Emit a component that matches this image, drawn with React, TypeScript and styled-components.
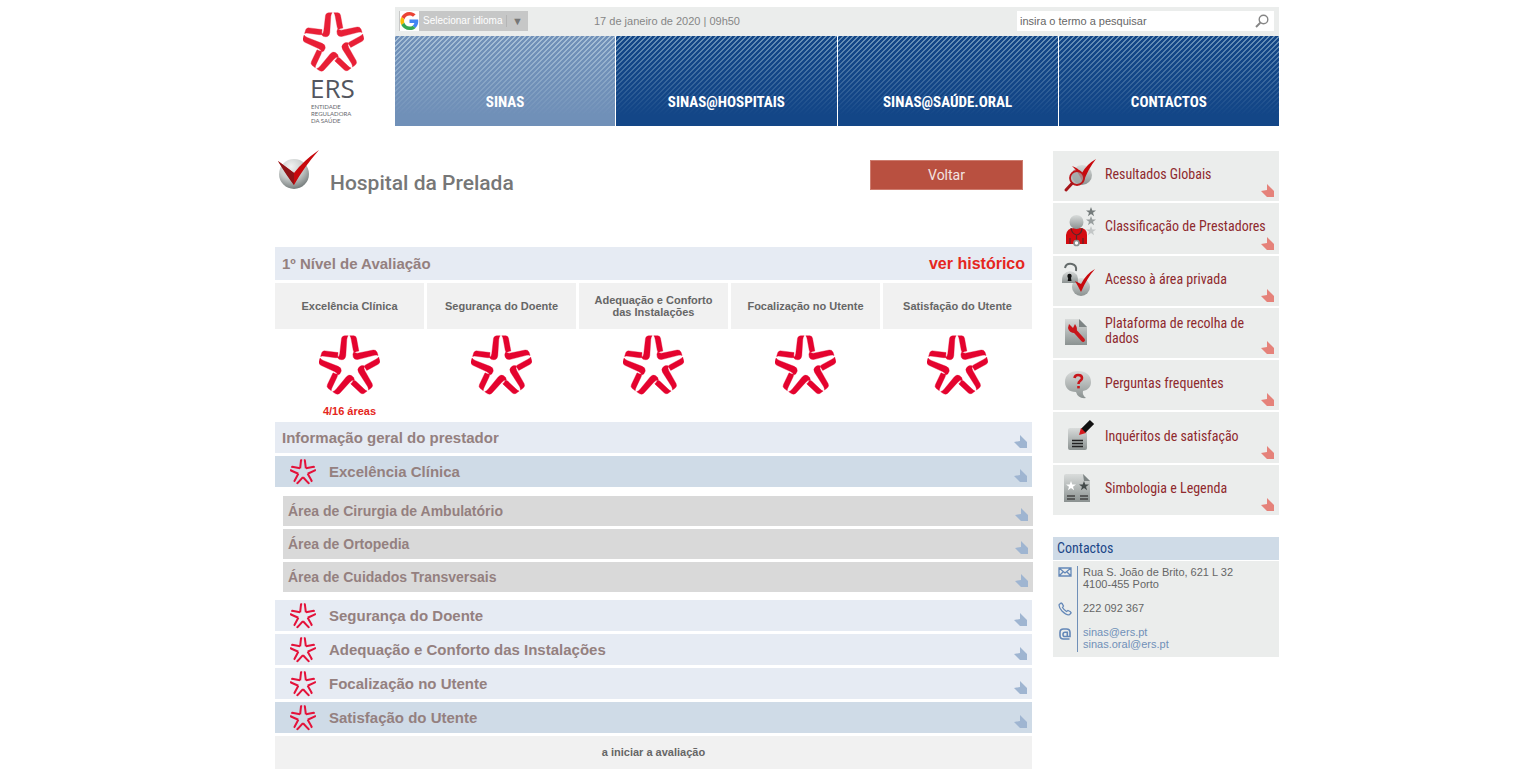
import React from 'react';
import styled, { createGlobalStyle, css } from 'styled-components';

const GlobalStyle = createGlobalStyle`
  *, *::before, *::after { box-sizing: border-box; }
  body {
    margin: 0;
    background: #fff;
    color: #666;
    font-family: "Liberation Sans", Arial, sans-serif;
    font-size: 11px;
  }
  button, input { font: inherit; }
  h1, h2, p, ul { margin: 0; padding: 0; }
  ul { list-style: none; }
`;

const narrow = '"Liberation Sans Narrow", "Arial Narrow", "Roboto Condensed", "DejaVu Sans Condensed", sans-serif';

const Page = styled.div`
  max-width: 1034px;
  margin: 0 auto;
  padding: 7px 0 7px 30px;
`;

const Header = styled.header`
  display: flex;
`;

const Brand = styled.a`
  flex: 0 0 120px;
  padding: 5px 0 0 28px;
  color: #53565f;
  text-decoration: none;
`;

const BrandName = styled.span`
  display: block;
  padding-left: 7px;
  font-family: "Open Sans", sans-serif;
  font-size: 26px;
  line-height: 26px;
`;

const BrandNote = styled.span`
  display: block;
  padding-left: 8px;
  margin-top: 2px;
  font-family: Lato, sans-serif;
  font-size: 6px;
  line-height: 7px;
  color: #66686e;
`;

const HeaderMain = styled.div`
  flex: 1;
  min-width: 0;
`;

const TopBar = styled.div`
  display: flex;
  align-items: center;
  height: 29px;
  padding: 0 5px 1px 4px;
  background: #ebedec;
`;

const LanguageButton = styled.button`
  display: flex;
  align-items: center;
  height: 20px;
  width: 129px;
  padding: 0 5px 0 1px;
  border: 0;
  background: #c6c7c7;
  color: #fff;
  text-align: left;
`;

const LanguageLabel = styled.span`
  flex: 1;
  padding-left: 4px;
  font-size: 10px;
  line-height: 14px;
  white-space: nowrap;
`;

const LanguageCaret = styled.span`
  border-left: 1px solid #b5b5b5;
  padding-left: 5px;
  color: #777;
`;

const Today = styled.p`
  flex: 1;
  padding-left: 66px;
  color: #868686;
`;

const Search = styled.form`
  display: flex;
  align-items: center;
  width: 257px;
  height: 20px;
  background: #fff;
`;

const SearchInput = styled.input`
  flex: 1;
  min-width: 0;
  padding: 0 3px;
  border: 0;
  background: transparent;
  outline: 0;
  &::placeholder { color: #666; opacity: 1; }
`;

const SearchButton = styled.button`
  display: flex;
  padding: 0 5px 0 0;
  border: 0;
  background: none;
`;

const Nav = styled.nav`
  display: grid;
  grid-template-columns: repeat(4, 1fr);
  gap: 1px;
`;

const NavLink = styled.a<{ $active?: boolean }>`
  display: flex;
  align-items: flex-end;
  justify-content: center;
  height: 90px;
  padding-bottom: 15px;
  color: #fff;
  font: bold 15px/18px ${narrow};
  text-decoration: none;
  --base: ${p => (p.$active ? '#7090b8' : '#134687')};
  --line: ${p => (p.$active ? '#a9c2d8' : '#6a92b8')};
  background:
    linear-gradient(to bottom, transparent, var(--base) 88%),
    linear-gradient(135deg, var(--line) 12%, transparent 20% 44%, var(--line) 50% 62%, transparent 70% 94%, var(--line) 100%) 0 0 / 5px 5px,
    var(--base);
`;

const Columns = styled.div`
  display: flex;
  align-items: flex-start;
  gap: 21px;
  padding-top: 24px;
`;

const Main = styled.main`
  flex: 1;
  min-width: 0;
`;

const TitleRow = styled.div`
  display: flex;
  align-items: flex-start;
  height: 97px;
  padding-right: 9px;
`;

const Title = styled.h1`
  flex: 1;
  padding: 19px 0 0 11px;
  color: #777;
  font: 500 21px/28px Roboto, sans-serif;
`;

const BackButton = styled.button`
  width: 153px;
  height: 30px;
  margin-top: 10px;
  border: 1px solid #cd7c6f;
  background: #b95040;
  color: #f3e4e1;
  font: 14px/16px Roboto, sans-serif;
`;

const LevelBar = styled.div`
  display: flex;
  align-items: center;
  justify-content: space-between;
  height: 33px;
  padding: 0 7px;
  background: #e6ebf3;
`;

const LevelTitle = styled.h2`
  color: #94807f;
  font-size: 15px;
  line-height: 18px;
`;

const HistoryLink = styled.a`
  color: #e52620;
  font-size: 16px;
  font-weight: bold;
  line-height: 18px;
  text-decoration: none;
`;

const Ratings = styled.table`
  table-layout: fixed;
  border-spacing: 3px;
  border-collapse: separate;
  width: calc(100% + 6px);
  margin: 0 -3px;
`;

const RatingHead = styled.th`
  height: 46px;
  padding: 0 12px;
  background: #f1f1f1;
  color: #666;
  font-size: 11px;
  line-height: 12px;
`;

const RatingCell = styled.td`
  height: 87px;
  padding: 3px 0 0;
  text-align: center;
  vertical-align: top;
  color: #e52620;
  font-weight: bold;
`;

const Areas = styled.p`
  padding-top: 6px;
  line-height: 14px;
`;

const Stack = styled.ul`
  display: grid;
  gap: 3px;
`;

const SubStack = styled(Stack)`
  margin-right: -1px;
  padding: 6px 0 5px 8px;
`;

type Tone = 'light' | 'strong' | 'grey';
const tones: Record<Tone, string> = { light: '#e6ebf3', strong: '#cfdbe7', grey: '#d9d9d9' };

const RowButton = styled.button<{ $tone: Tone }>`
  display: flex;
  align-items: center;
  width: 100%;
  height: 31px;
  padding: 0 5px 0 7px;
  border: 0;
  background: ${p => tones[p.$tone]};
  color: #94807f;
  font-size: 15px;
  font-weight: bold;
  line-height: 18px;
  text-align: left;
  ${p => p.$tone === 'grey' && css`
    height: 30px;
    padding-left: 5px;
    font-size: 14px;
  `}
`;

const RowIcon = styled.span`
  display: flex;
  width: 47px;
  padding-left: 8px;
`;

const RowText = styled.span`
  flex: 1;
`;

const RowMark = styled.span`
  display: flex;
  align-self: flex-end;
  padding-bottom: 5px;
`;

const Pending = styled.p`
  height: 33px;
  background: #f1f1f1;
  color: #666;
  font-weight: bold;
  line-height: 33px;
  text-align: center;
`;

const Sidebar = styled.aside`
  flex: 0 0 226px;
  padding-top: 1px;
`;

const Shortcuts = styled.ul`
  display: grid;
  grid-auto-rows: 1fr;
  gap: 2px;
  min-height: 364px;
`;

const Shortcut = styled.a`
  position: relative;
  display: flex;
  align-items: center;
  height: 100%;
  padding: 0 10px 3px 4px;
  background: #ebedec;
  color: #8f2a2e;
  font: 14px/15px ${narrow};
  text-decoration: none;
`;

const ShortcutIcon = styled.span`
  flex: 0 0 48px;
  display: flex;
`;

const ShortcutMark = styled.span`
  position: absolute;
  right: 5px;
  bottom: 4px;
  display: flex;
`;

const Contacts = styled.section`
  margin-top: 22px;
`;

const ContactsTitle = styled.h2`
  padding: 0 4px;
  background: #cfdbe7;
  color: #1c4788;
  font: 14px/23px ${narrow};
`;

const ContactsBody = styled.div`
  margin-top: 1px;
  padding: 5px;
  background: #ebedec;
`;

const ContactRow = styled.div`
  display: flex;
`;

const ContactIcon = styled.span`
  flex: 0 0 19px;
`;

const ContactText = styled.div<{ $last?: boolean }>`
  padding: 0 0 ${p => (p.$last ? 2 : 12)}px 5px;
  border-left: 1px solid #7090b8;
  line-height: 12px;
`;

const MailLink = styled.a`
  display: block;
  color: #7090b8;
  text-decoration: none;
`;

function Star({ size, color = '#e4032e' }: { size: number; color?: string }) {
  return (
    <svg width={size} height={size} viewBox="-91 -93 182 182" fill={color} stroke={color} strokeWidth="1" aria-hidden="true">
      {[0, 72, 144, 216, 288].map(a => (
        <g key={a} transform={`rotate(${a})`}>
          <path d="M-4-91H-14Q-23-90-24-82L-29-38Q-30-29-36-25Q-31-18-22-19Q-12-20-11-32L-8-80Q-7-88-4-91Z" />
          <path d="M1-91H13Q20-90 21-83L28-45Q21-44 15-41Q12-42 11-48L5-80Q4-88 1-91Z" />
        </g>
      ))}
    </svg>
  );
}

function SmallStar() {
  return (
    <svg width="26" height="26" viewBox="-91 -93 182 182" fill="none" stroke="#e4123a" strokeWidth="14" strokeLinejoin="round" aria-hidden="true">
      {[0, 72, 144, 216, 288].map(a => (
        <path key={a} transform={`rotate(${a})`} d="M-20-28L-14-84H-6M6-84H13L20-28" />
      ))}
    </svg>
  );
}

function Corner({ color }: { color: string }) {
  return (
    <svg width="13" height="13" viewBox="0 0 13 13" aria-hidden="true">
      <path d="M0 7L6 6V0L13 7V13H6Z" fill={color} />
    </svg>
  );
}

function Google() {
  return (
    <svg width="19" height="20" viewBox="-1 -2 50 52" aria-hidden="true">
      <path fill="#fff" d="M-2-3h53v55h-53z" />
      <path fill="#ea4335" d="M24 9.500c3.500 0 6.700 1.200 9.200 3.600l6.900-6.900C35.900 2.400 30.500 0 24 0 14.600 0 6.500 5.400 2.600 13.200l8 6.200C12.400 13.700 17.700 9.500 24 9.500z" />
      <path fill="#4285f4" d="M47 24.600c0-1.600-.2-3.100-.4-4.600H24v9h12.900c-.6 3-2.200 5.500-4.800 7.200l7.700 6C44.400 38 47 31.800 47 24.600z" />
      <path fill="#fbbc05" d="M10.500 28.600a14.500 14.500 0 0 1 0-9.200l-8-6.200a24 24 0 0 0 0 21.600z" />
      <path fill="#34a853" d="M24 48c6.500 0 11.900-2.100 15.900-5.800l-7.700-6c-2.200 1.500-4.900 2.300-8.200 2.300-6.300 0-11.600-4.200-13.500-9.900l-8 6.200C6.500 42.600 14.600 48 24 48z" />
    </svg>
  );
}

function SearchGlyph() {
  return (
    <svg width="14" height="14" viewBox="0 0 14 14" fill="none" stroke="#858585" aria-hidden="true">
      <circle cx="8.500" cy="5.500" r="4.300" strokeWidth="1.400" />
      <path d="M5.300 8.800L1 13" strokeWidth="1.900" />
    </svg>
  );
}

function Silver({ id }: { id: string }) {
  return (
    <defs>
      <linearGradient id={id} x1="0" y1="0" x2="0" y2="1">
        <stop offset="0" stopColor="#d9dcdb" />
        <stop offset="1" stopColor="#8b9291" />
      </linearGradient>
    </defs>
  );
}

function CheckBall() {
  return (
    <svg width="44" height="42" viewBox="0 0 44 42" aria-hidden="true">
      <defs>
        <radialGradient id="ball" cx=".4" cy=".25" r=".8">
          <stop offset="0" stopColor="#f1f3f2" />
          <stop offset=".5" stopColor="#c9cdcc" />
          <stop offset="1" stopColor="#6d7474" />
        </radialGradient>
      </defs>
      <circle cx="19" cy="24" r="15" fill="url(#ball)" />
      <path d="M3 11L19 23Q28 11 44 0Q29 17 19 35Z" fill="#c8090d" />
      <path d="M3 11L19 23V35Q11 25 3 11Z" fill="#8e1417" />
    </svg>
  );
}

const star5 = '0,-5 1.300,-1.500 5,-1.500 2,0.800 3.100,4.300 0,2.100 -3.100,4.300 -2,0.800 -5,-1.500 -1.300,-1.500';

type IconName = 'results' | 'providers' | 'access' | 'platform' | 'faq' | 'survey' | 'legend';

function Glyph({ name }: { name: IconName }) {
  const id = `silver-${name}`;
  const fill = `url(#${id})`;
  return (
    <svg width="44" height="42" viewBox="0 0 44 42" aria-hidden="true">
      <Silver id={id} />
      {name === 'results' && (
        <>
          <circle cx="25" cy="21" r="10" fill={fill} />
          <path d="M15 12Q21 14 25 19Q30 10 39 5Q31 15 26 29Q21 17 15 12Z" fill="#c8090d" />
          <circle cx="20" cy="24" r="7" fill="#a3a9a9" fillOpacity=".75" stroke="#bd1519" strokeWidth="1.800" />
          <path d="M15 29.500L9 36" stroke="#a61519" strokeWidth="3" strokeLinecap="round" />
        </>
      )}
      {name === 'providers' && (
        <>
          <path d="M9 38V29Q10 22 17 22H23Q30 22 30 29V38Z" fill="#d30b10" />
          <circle cx="19.500" cy="16" r="7" fill={fill} />
          <path d="M14 22Q15 28 19.500 29Q25 28 25 22M19.500 29V34M13 32V38M26 32V38" fill="none" stroke="#55282a" strokeWidth="1.200" />
          <circle cx="19.500" cy="37" r="2.500" fill="#fff" stroke="#8b9291" strokeWidth="1.700" />
          {[['#747b7b', 6], ['#989e9e', 15], ['#c3c7c7', 25]].map(([c, y]) => (
            <polygon key={String(y)} points={star5} fill={String(c)} transform={`translate(34 ${y})`} />
          ))}
        </>
      )}
      {name === 'access' && (
        <>
          <circle cx="24" cy="29" r="9" fill={fill} />
          <path d="M8 10Q9 5 15 6Q20 7 19 13" fill="none" stroke="#646b6b" strokeWidth="2" />
          <path d="M5 25Q4 14 13 13Q22 14 21 25Z" fill={fill} />
          <circle cx="12.500" cy="18" r="2.200" fill="#111" />
          <path d="M11.500 18H13.700L14.500 23H10.700Z" fill="#111" />
          <path d="M18 23L24 26Q29 16 38 11Q30 20 24 34Q21 28 18 23Z" fill="#c8090d" />
        </>
      )}
      {name === 'platform' && (
        <>
          <path d="M8 9H22L30 17V35H8Z" fill={fill} />
          <path d="M22 9L30 17H22Z" fill="#7d8484" />
          <path d="M17 20L26 30" stroke="#c8161b" strokeWidth="4" strokeLinecap="round" />
          <path d="M12 14L16 18L18 14Q22 20 18 23Q12 23 11 18Z" fill="#c8161b" />
        </>
      )}
      {name === 'faq' && (
        <>
          <path d="M21 8C29 8 34 12 34 19C34 24 31 27 26 28Q25 32 29 35Q21 36 19 29C12 29 8 25 8 19C8 12 13 8 21 8Z" fill={fill} />
          <path d="M17.500 15Q18 12 21 12Q25 12 25 15Q25 17 23 18Q21.500 19 21.500 21" fill="none" stroke="#c8161b" strokeWidth="2.600" />
          <path d="M20.200 23H22.800V25.400H20.200Z" fill="#c8161b" />
        </>
      )}
      {name === 'survey' && (
        <>
          <rect x="11" y="13" width="19" height="22" rx="2" fill={fill} />
          <path d="M15 25.500H26M15 28.500H26M15 31.500H26" stroke="#222" strokeWidth="1.300" />
          <path d="M26 16L35 7" stroke="#111" strokeWidth="6" />
          <path d="M24 13L22 20L29 18Z" fill="#d51a1d" />
        </>
      )}
      {name === 'legend' && (
        <>
          <path d="M7 9Q7 7 9 7H26L33 14V35H7Z" fill={fill} />
          <path d="M26 7L33 14H27Z" fill="#7d8484" />
          <polygon points={star5} fill="#fff" transform="translate(14 19)" />
          <polygon points={star5} fill="#444b4b" transform="translate(27 19)" />
          <path d="M10 29H18M10 32H18M23 29H31M23 32H31" stroke="#444" strokeWidth="1.400" />
        </>
      )}
    </svg>
  );
}

function ContactGlyph({ kind }: { kind: 'mail' | 'phone' | 'at' }) {
  return (
    <svg width="14" height={kind === 'mail' ? 12 : 14} viewBox={kind === 'mail' ? '0 0 14 12' : '0 0 14 14'} fill="none" stroke="#6488b8" strokeWidth="1.300" aria-hidden="true">
      {kind === 'mail' && <path d="M1 2H13V10H1ZM1 2L7 7L13 2M1 10L5 6M13 10L9 6" />}
      {kind === 'phone' && (
        <path d="M1.200 2.500L3 1Q4 .8 5.500 4L4.500 5.500Q6 8 8.500 9.500L10 8.500Q13 9.700 13.200 10.800L11.500 12.700Q8.500 13.500 4 9Q.5 5 1.200 2.500Z" />
      )}
      {kind === 'at' && (
        <path d="M11.500 13H5.500Q2 13 2 9.500V6.500Q2 3 5.500 3H8.500Q12 3 12 6.500V10.500H9.300V6.300H7Q5 6.300 5 8.500T7 10.500H9.300" strokeWidth="1.600" />
      )}
    </svg>
  );
}

const navItems = ['SINAS', 'SINAS@HOSPITAIS', 'SINAS@SAÚDE.ORAL', 'CONTACTOS'];

const ratings = [
  { label: 'Excelência Clínica', areas: '4/16 áreas' },
  { label: 'Segurança do Doente' },
  { label: 'Adequação e Conforto das Instalações' },
  { label: 'Focalização no Utente' },
  { label: 'Satisfação do Utente' },
];

const areas = ['Área de Cirurgia de Ambulatório', 'Área de Ortopedia', 'Área de Cuidados Transversais'];

const shortcuts: { icon: IconName; label: string }[] = [
  { icon: 'results', label: 'Resultados Globais' },
  { icon: 'providers', label: 'Classificação de Prestadores' },
  { icon: 'access', label: 'Acesso à área privada' },
  { icon: 'platform', label: 'Plataforma de recolha de dados' },
  { icon: 'faq', label: 'Perguntas frequentes' },
  { icon: 'survey', label: 'Inquéritos de satisfação' },
  { icon: 'legend', label: 'Simbologia e Legenda' },
];

function Row({ label, tone = 'light', starred }: { label: string; tone?: Tone; starred?: boolean }) {
  return (
    <li>
      <RowButton type="button" $tone={tone}>
        {starred && <RowIcon><SmallStar /></RowIcon>}
        <RowText>{label}</RowText>
        <RowMark><Corner color="#9fb5d1" /></RowMark>
      </RowButton>
    </li>
  );
}

export default function App() {
  return (
    <>
      <GlobalStyle />
      <Page>
        <Header>
          <Brand href="#">
            <Star size={61} color="#e81f36" />
            <BrandName>ERS</BrandName>
            <BrandNote>ENTIDADE<br />REGULADORA<br />DA SAÚDE</BrandNote>
          </Brand>
          <HeaderMain>
            <TopBar>
              <LanguageButton type="button">
                <Google />
                <LanguageLabel>Selecionar idioma</LanguageLabel>
                <LanguageCaret>▼</LanguageCaret>
              </LanguageButton>
              <Today>17 de janeiro de 2020 | 09h50</Today>
              <Search>
                <SearchInput type="text" aria-label="Pesquisar" placeholder="insira o termo a pesquisar" />
                <SearchButton type="button" aria-label="Pesquisar"><SearchGlyph /></SearchButton>
              </Search>
            </TopBar>
            <Nav>
              {navItems.map((item, i) => (
                <NavLink key={item} href="#" $active={i === 0}>{item}</NavLink>
              ))}
            </Nav>
          </HeaderMain>
        </Header>

        <Columns>
          <Main>
            <TitleRow>
              <CheckBall />
              <Title>Hospital da Prelada</Title>
              <BackButton type="button">Voltar</BackButton>
            </TitleRow>
            <LevelBar>
              <LevelTitle>1º Nível de Avaliação</LevelTitle>
              <HistoryLink href="#">ver histórico</HistoryLink>
            </LevelBar>
            <Ratings>
              <thead>
                <tr>{ratings.map(r => <RatingHead key={r.label} scope="col">{r.label}</RatingHead>)}</tr>
              </thead>
              <tbody>
                <tr>
                  {ratings.map(r => (
                    <RatingCell key={r.label}>
                      <Star size={61} />
                      {r.areas && <Areas>{r.areas}</Areas>}
                    </RatingCell>
                  ))}
                </tr>
              </tbody>
            </Ratings>
            <Stack>
              <Row label="Informação geral do prestador" />
              <Row label="Excelência Clínica" tone="strong" starred />
              <li>
                <SubStack>
                  {areas.map(a => <Row key={a} label={a} tone="grey" />)}
                </SubStack>
              </li>
              <Row label="Segurança do Doente" starred />
              <Row label="Adequação e Conforto das Instalações" starred />
              <Row label="Focalização no Utente" starred />
              <Row label="Satisfação do Utente" tone="strong" starred />
              <li><Pending>a iniciar a avaliação</Pending></li>
            </Stack>
          </Main>

          <Sidebar>
            <Shortcuts>
              {shortcuts.map(s => (
                <li key={s.icon}>
                  <Shortcut href="#">
                    <ShortcutIcon><Glyph name={s.icon} /></ShortcutIcon>
                    <span>{s.label}</span>
                    <ShortcutMark><Corner color="#e5827a" /></ShortcutMark>
                  </Shortcut>
                </li>
              ))}
            </Shortcuts>
            <Contacts>
              <ContactsTitle>Contactos</ContactsTitle>
              <ContactsBody>
                <ContactRow>
                  <ContactIcon><ContactGlyph kind="mail" /></ContactIcon>
                  <ContactText>Rua S. João de Brito, 621 L 32<br />4100-455 Porto</ContactText>
                </ContactRow>
                <ContactRow>
                  <ContactIcon><ContactGlyph kind="phone" /></ContactIcon>
                  <ContactText>222 092 367</ContactText>
                </ContactRow>
                <ContactRow>
                  <ContactIcon><ContactGlyph kind="at" /></ContactIcon>
                  <ContactText $last>
                    <MailLink href="mailto:sinas@ers.pt">sinas@ers.pt</MailLink>
                    <MailLink href="mailto:sinas.oral@ers.pt">sinas.oral@ers.pt</MailLink>
                  </ContactText>
                </ContactRow>
              </ContactsBody>
            </Contacts>
          </Sidebar>
        </Columns>
      </Page>
    </>
  );
}
